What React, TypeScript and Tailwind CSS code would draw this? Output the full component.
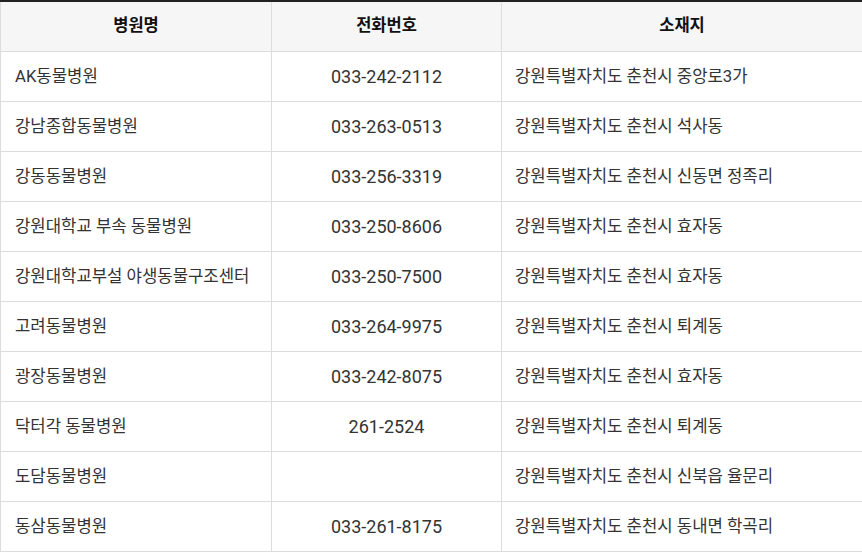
import React from "react";

const rows: [string, string, string][] = [
  ["AK동물병원", "033-242-2112", "강원특별자치도 춘천시 중앙로3가"],
  ["강남종합동물병원", "033-263-0513", "강원특별자치도 춘천시 석사동"],
  ["강동동물병원", "033-256-3319", "강원특별자치도 춘천시 신동면 정족리"],
  ["강원대학교 부속 동물병원", "033-250-8606", "강원특별자치도 춘천시 효자동"],
  ["강원대학교부설 야생동물구조센터", "033-250-7500", "강원특별자치도 춘천시 효자동"],
  ["고려동물병원", "033-264-9975", "강원특별자치도 춘천시 퇴계동"],
  ["광장동물병원", "033-242-8075", "강원특별자치도 춘천시 효자동"],
  ["닥터각 동물병원", "261-2524", "강원특별자치도 춘천시 퇴계동"],
  ["도담동물병원", "", "강원특별자치도 춘천시 신북읍 율문리"],
  ["동삼동물병원", "033-261-8175", "강원특별자치도 춘천시 동내면 학곡리"],
];

const font = { fontFamily: '"Roboto", "Noto Sans CJK KR", sans-serif' };

export default function App() {
  return (
    <div
      className="w-[862px] h-[552px] overflow-hidden bg-white text-[#333]"
      style={font}
    >
      <div className="border-t-2 border-[#222]">
        <div className="grid grid-cols-[271px_230px_361px] bg-[#f6f6f6] text-[16.5px] font-bold text-[#111]">
          <div className="h-[50px] border-l border-b border-[#dddddd] flex items-center justify-center">병원명</div>
          <div className="h-[50px] border-l border-b border-[#dddddd] flex items-center justify-center">전화번호</div>
          <div className="h-[50px] border-l border-b border-[#dddddd] flex items-center justify-center">소재지</div>
        </div>
        {rows.map((r, i) => (
          <div key={i} className="grid grid-cols-[271px_230px_361px]">
            <div className="h-[50px] border-l border-b border-[#dddddd] flex items-center pl-[14px] text-[16.7px] whitespace-nowrap">{r[0]}</div>
            <div className="h-[50px] border-l border-b border-[#dddddd] flex items-center justify-center text-[18px]">{r[1]}</div>
            <div className="h-[50px] border-l border-b border-[#dddddd] flex items-center pl-[13px] text-[16.7px] whitespace-nowrap">{r[2]}</div>
          </div>
        ))}
      </div>
    </div>
  );
}
